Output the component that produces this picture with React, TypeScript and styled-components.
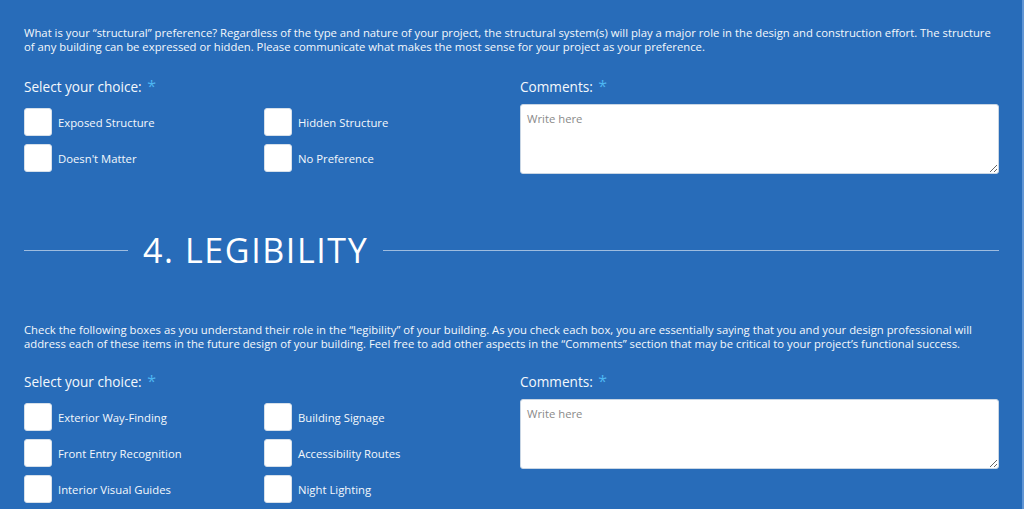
import * as React from 'react';
import styled, { createGlobalStyle } from 'styled-components';

const GlobalStyle = createGlobalStyle`
  html, body {
    margin: 0;
    padding: 0;
    background: #286cb9;
  }
  body {
    font-family: 'Open Sans', 'Liberation Sans', sans-serif;
    color: #fff;
  }
`;

const Page = styled.div`
  height: 509px;
  background: #286cb9;
  border-right: 2px solid #5f95d4;
  box-sizing: border-box;
  padding: 0 23px 0 24px;
  overflow: hidden;
`;

const Intro = styled.p<{ $top: number }>`
  margin: ${({ $top }) => $top}px 0 0;
  font-size: 11.3px;
  line-height: 14px;
  color: #f4f8fc;
`;

const FieldsRow = styled.div<{ $top: number }>`
  display: grid;
  grid-template-columns: 476px 1fr;
  column-gap: 20px;
  align-items: start;
  margin-top: ${({ $top }) => $top}px;
`;

const FieldLabel = styled.div`
  font-size: 13.6px;
  line-height: 18px;
  color: #f4f8fc;
  margin-bottom: 12px;
`;

const Required = styled.span`
  color: #4db6f2;
  font-size: 16px;
  margin-left: 2px;
`;

const ChoiceGrid = styled.div`
  display: grid;
  grid-template-columns: 240px 240px;
  row-gap: 8px;
`;

const Choice = styled.label`
  display: flex;
  align-items: center;
  gap: 6px;
  font-size: 11.3px;
  color: #f4f8fc;
`;

const Box = styled.span`
  width: 28px;
  height: 28px;
  box-sizing: border-box;
  background: #fff;
  border: 1px solid #d6e0ea;
  border-radius: 3px;
  flex-shrink: 0;
`;

const Comment = styled.textarea`
  display: block;
  width: 100%;
  height: 70px;
  box-sizing: border-box;
  margin-top: -4px;
  border: 1px solid #c9d6e4;
  border-radius: 3px;
  padding: 6px 6px;
  font-family: 'Open Sans', 'Liberation Sans', sans-serif;
  font-size: 11.3px;
  color: #333;
  background: #fff;
  resize: vertical;
  &::placeholder {
    color: #8a8a8a;
  }
`;

const SectionHeading = styled.div`
  display: flex;
  align-items: center;
  gap: 15px;
  margin: 56px 0 0;
`;

const Rule = styled.div<{ $width?: number }>`
  height: 1px;
  background: rgba(255, 255, 255, 0.55);
  ${({ $width }) => ($width ? `width: ${$width}px; flex-shrink: 0;` : 'flex: 1;')}
`;

const HeadingText = styled.h2`
  margin: 0;
  font-size: 34px;
  font-weight: 400;
  line-height: 40px;
  letter-spacing: 1.6px;
  color: #fff;
`;

type Section = {
  intro: React.ReactNode;
  choices: string[];
  top: number;
  fieldsTop: number;
};

function FormSection({ intro, choices, top, fieldsTop }: Section): JSX.Element {
  return (
    <div>
      <Intro $top={top}>{intro}</Intro>
      <FieldsRow $top={fieldsTop}>
        <div>
          <FieldLabel>
            Select your choice: <Required>*</Required>
          </FieldLabel>
          <ChoiceGrid>
            {choices.map(c => (
              <Choice key={c}>
                <Box />
                {c}
              </Choice>
            ))}
          </ChoiceGrid>
        </div>
        <div>
          <FieldLabel>
            Comments: <Required>*</Required>
          </FieldLabel>
          <Comment placeholder="Write here" />
        </div>
      </FieldsRow>
    </div>
  );
}

export default function App(): JSX.Element {
  return (
    <Page>
      <GlobalStyle />
      <FormSection
        top={26}
        fieldsTop={23}
        intro={
          <>
            What is your “structural” preference? Regardless of the type and nature of your
            project, the structural system(s) will play a major role in the design and
            construction effort. The structure of any building can be expressed or hidden.
            Please communicate what makes the most sense for your project as your preference.
          </>
        }
        choices={['Exposed Structure', 'Hidden Structure', "Doesn't Matter", 'No Preference']}
      />
      <SectionHeading>
        <Rule $width={104} />
        <HeadingText>4. LEGIBILITY</HeadingText>
        <Rule />
      </SectionHeading>
      <FormSection
        top={53}
        fieldsTop={21}
        intro={
          <>
            Check the following boxes as you understand their role in the “legibility” of your
            building. As you check each box, you are essentially saying that you and your design
            professional will address each of these items in the future design of your building.
            Feel free to add other aspects in the “Comments” section that may be critical to your
            project’s functional success.
          </>
        }
        choices={[
          'Exterior Way-Finding',
          'Building Signage',
          'Front Entry Recognition',
          'Accessibility Routes',
          'Interior Visual Guides',
          'Night Lighting',
        ]}
      />
    </Page>
  );
}
